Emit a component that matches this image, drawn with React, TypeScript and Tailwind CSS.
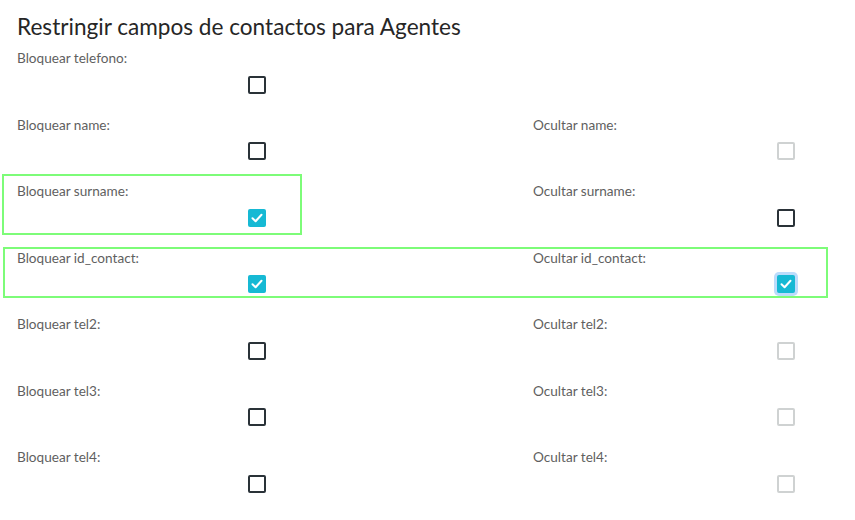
import React from 'react';

type Field = {
  name: string;
  block: 'off' | 'on';
  hide?: 'off' | 'muted' | 'on' | 'focus';
};

const fields: Field[] = [
  { name: 'telefono', block: 'off' },
  { name: 'name', block: 'off', hide: 'muted' },
  { name: 'surname', block: 'on', hide: 'off' },
  { name: 'id_contact', block: 'on', hide: 'focus' },
  { name: 'tel2', block: 'off', hide: 'muted' },
  { name: 'tel3', block: 'off', hide: 'muted' },
  { name: 'tel4', block: 'off', hide: 'muted' },
];

function Check({ state }: { state: 'off' | 'muted' | 'on' | 'focus' }) {
  if (state === 'on' || state === 'focus') {
    return (
      <span
        className={
          'flex h-[18px] w-[18px] items-center justify-center rounded-[2px] bg-[#16b9d4] ' +
          (state === 'focus' ? 'ring-[3px] ring-[#bcdcfb]' : '')
        }
      >
        <svg width="12" height="10" viewBox="0 0 12 10" fill="none">
          <path d="M1.5 5.2 4.6 8.2 10.5 1.8" stroke="white" strokeWidth="2" strokeLinecap="round" strokeLinejoin="round" />
        </svg>
      </span>
    );
  }
  return (
    <span
      className={
        'block h-[18px] w-[18px] rounded-[2px] border-2 bg-white ' +
        (state === 'muted' ? 'border-[#cfd2d2]' : 'border-[#2a3238]')
      }
    />
  );
}

export default function App() {
  return (
    <div className="w-[855px] h-[520px] bg-white overflow-hidden font-['Lato','Liberation_Sans',sans-serif]">
      <h2 className="pl-[17px] pt-[12px] text-[22.6px] leading-[30px] text-[#262626]">
        Restringir campos de contactos para Agentes
      </h2>

      <div className="mt-[6px]">
        {fields.map((f) => (
          <div key={f.name} className="relative flex h-[66.5px]">
            {f.name === 'surname' && (
              <div className="pointer-events-none absolute left-[2px] top-[-7px] h-[61px] w-[300px] border-2 border-[#7dfc78]" />
            )}
            {f.name === 'id_contact' && (
              <div className="pointer-events-none absolute left-[3px] top-[-0.5px] h-[51px] w-[825px] border-2 border-[#7dfc78]" />
            )}

            <div className="w-[533px] pl-[17px]">
              <div className="h-[20px] text-[13.6px] leading-[20px] text-[#5f5f5f]">Bloquear {f.name}:</div>
              <div className="mt-[7.5px] pl-[231px]">
                <Check state={f.block} />
              </div>
            </div>

            {f.hide && (
              <div className="flex-1">
                <div className="h-[20px] text-[13.6px] leading-[20px] text-[#5f5f5f]">Ocultar {f.name}:</div>
                <div className="mt-[7.5px] pl-[244px]">
                  <Check state={f.hide} />
                </div>
              </div>
            )}
          </div>
        ))}
      </div>
    </div>
  );
}
